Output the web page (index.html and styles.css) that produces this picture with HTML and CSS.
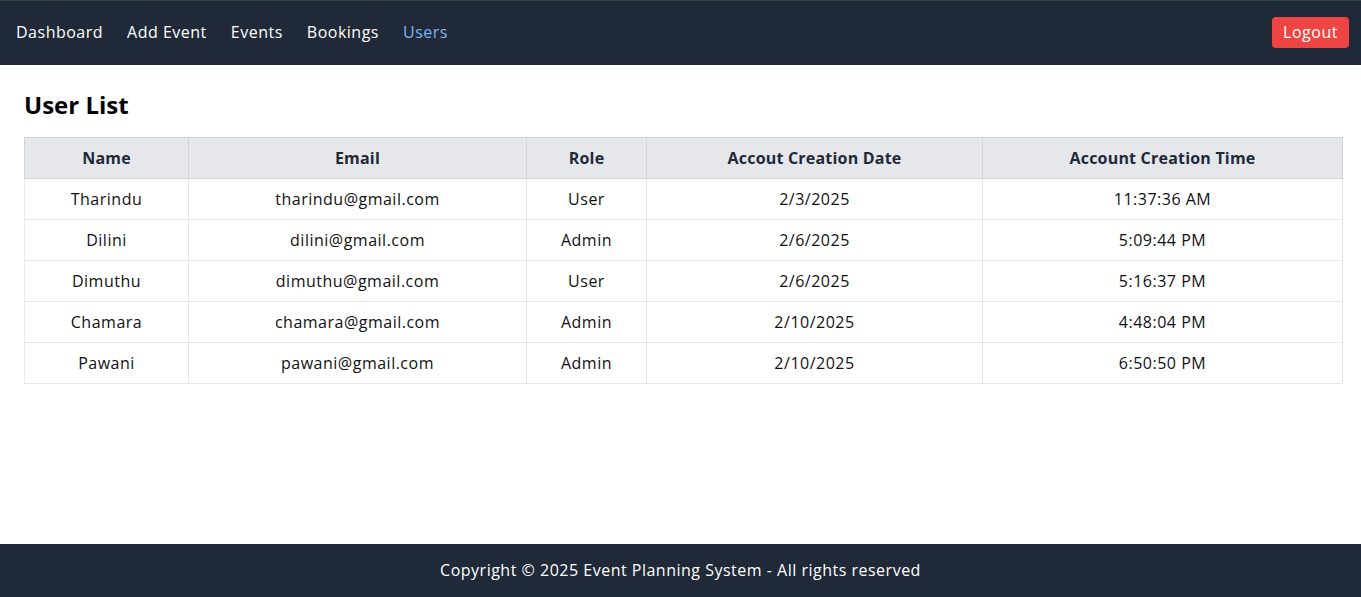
FILE: index.html
```html
<!DOCTYPE html>
<html lang="en">
<head>
<meta charset="utf-8">
<title>User List</title>
<link rel="stylesheet" href="styles.css">
</head>
<body>
<div class="page">
  <nav class="navbar">
    <ul class="nav-links">
      <li><a href="#" class="nav-link">Dashboard</a></li>
      <li><a href="#" class="nav-link">Add Event</a></li>
      <li><a href="#" class="nav-link">Events</a></li>
      <li><a href="#" class="nav-link">Bookings</a></li>
      <li><a href="#" class="nav-link active">Users</a></li>
    </ul>
    <button class="logout">Logout</button>
  </nav>
  <main class="content">
    <h1 class="title">User List</h1>
    <table class="users">
      <thead>
        <tr>
          <th class="c-name">Name</th>
          <th class="c-email">Email</th>
          <th class="c-role">Role</th>
          <th class="c-date">Accout Creation Date</th>
          <th class="c-time">Account Creation Time</th>
        </tr>
      </thead>
      <tbody>
        <tr><td>Tharindu</td><td>tharindu@gmail.com</td><td>User</td><td>2/3/2025</td><td>11:37:36 AM</td></tr>
        <tr><td>Dilini</td><td>dilini@gmail.com</td><td>Admin</td><td>2/6/2025</td><td>5:09:44 PM</td></tr>
        <tr><td>Dimuthu</td><td>dimuthu@gmail.com</td><td>User</td><td>2/6/2025</td><td>5:16:37 PM</td></tr>
        <tr><td>Chamara</td><td>chamara@gmail.com</td><td>Admin</td><td>2/10/2025</td><td>4:48:04 PM</td></tr>
        <tr><td>Pawani</td><td>pawani@gmail.com</td><td>Admin</td><td>2/10/2025</td><td>6:50:50 PM</td></tr>
      </tbody>
    </table>
  </main>
  <footer class="footer">Copyright © 2025 Event Planning System - All rights reserved</footer>
</div>
</body>
</html>
```
FILE: styles.css
```css
* { box-sizing: border-box; }
html, body { margin: 0; padding: 0; }
body {
  font-family: "Open Sans", "Noto Sans", sans-serif;
  font-size: 16px;
  letter-spacing: 0.5px;
  color: #111;
  background: #fff;
}
.page {
  min-height: 100vh;
  display: flex;
  flex-direction: column;
}
.navbar {
  background: #1f2937;
  border-top: 1px solid #3b3f45;
  height: 65px;
  padding: 0 12px 0 16px;
  display: flex;
  align-items: center;
  justify-content: space-between;
}
.nav-links {
  list-style: none;
  margin: 0;
  padding: 0;
  display: flex;
  gap: 24px;
}
.nav-link {
  color: #fff;
  text-decoration: none;
  line-height: 24px;
  display: block;
  margin-top: -2px;
}
.nav-link.active { color: #7fb3f5; }
.logout {
  font: inherit;
  letter-spacing: 0.5px;
  background: #ef4444;
  color: #fff;
  border: 0;
  border-radius: 4px;
  height: 31px;
  width: 77px;
  padding: 0;
  margin-top: -2px;
}
.content {
  flex: 1;
  padding: 24px 19px 24px 24px;
}
.title {
  margin: 0 0 16px;
  font-size: 24px;
  line-height: 32px;
  font-weight: 700;
  letter-spacing: 0;
  color: #000;
}
.users {
  width: 100%;
  border-collapse: collapse;
  table-layout: fixed;
  border: 1px solid #e5e7eb;
}
.users th, .users td {
  text-align: center;
  height: 41px;
  padding: 0 8px;
  border: 1px solid #e5e7eb;
}
.users th {
  background: #e5e7eb;
  border-color: #d1d5db;
  font-weight: 700;
  font-size: 16px;
  letter-spacing: 0.2px;
  color: #1f2937;
}
.users td { color: #111; }
.c-name { width: 164px; }
.c-email { width: 338px; }
.c-role { width: 120px; }
.c-date { width: 336px; }
.c-time { width: 360px; }
.footer {
  background: #1f2937;
  color: #fff;
  text-align: center;
  height: 53px;
  line-height: 53px;
}
```
